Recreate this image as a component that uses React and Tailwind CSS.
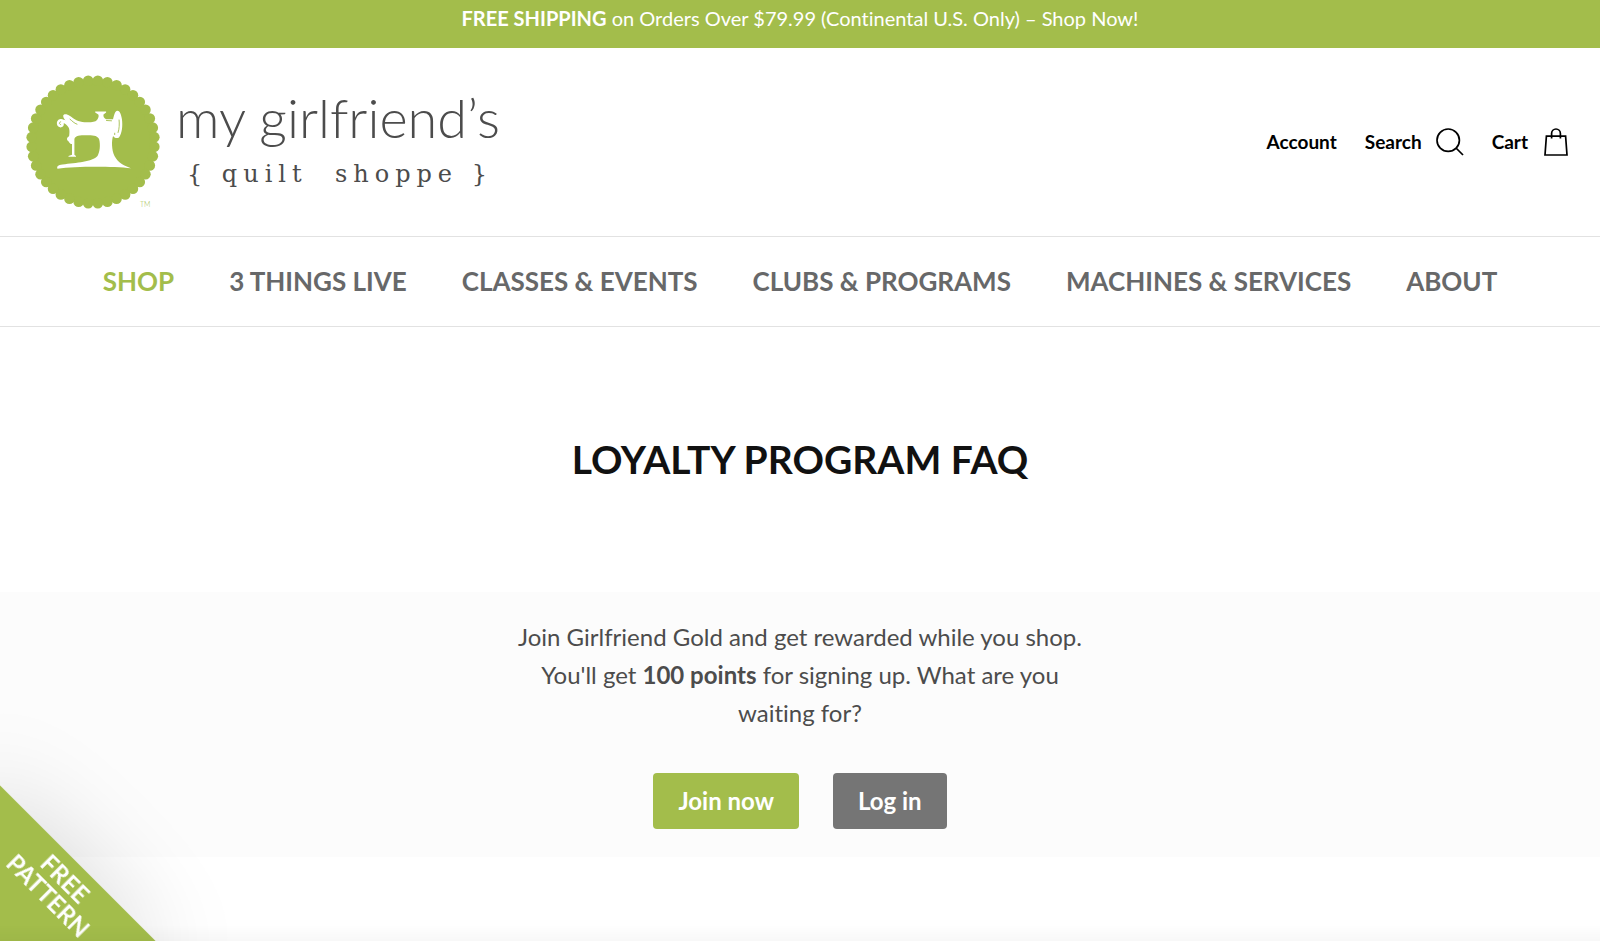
const NAV = [
  "SHOP",
  "3 THINGS LIVE",
  "CLASSES & EVENTS",
  "CLUBS & PROGRAMS",
  "MACHINES & SERVICES",
  "ABOUT",
];

const SCALLOPS = Array.from({ length: 40 }, (_, i) => {
  const a = ((i + 0.5) / 40) * Math.PI * 2;
  return { x: 67 + Math.cos(a) * 61.5, y: 67 + Math.sin(a) * 61.5 };
});

function Badge() {
  return (
    <svg viewBox="0 0 134 134" className="w-[134px] h-[134px] shrink-0 overflow-visible" aria-hidden="true">
      <g fill="#a3bd4b">
        <circle cx="67" cy="67" r="63" />
        {SCALLOPS.map((s, i) => (
          <circle key={i} cx={s.x} cy={s.y} r="5.3" />
        ))}
      </g>
      <g transform="translate(-25.5 -75)">
        {/* machine body, arm and base */}
        <path
          fill="#fff"
          d="M62.7 115.4C63.5 113.6 66.5 113.8 69.5 116C73.5 119 78 122 84 122.2C90 122.4 94.5 122.3 96.5 120C98 118 98.6 116 97.8 114.6L94.7 112.4V111.6H105.6V112.4L103 114.6C102.6 116.5 103.5 118.4 105.5 119.2L112.5 119.3C113.5 116 114 112 116.5 110.8C119 110.4 120.6 114 121.4 119C122.4 126 121.5 133 118.5 137.5C116 139 113.5 137.5 112.6 136C111 140 111 150 114 156C118 163.5 124 165.5 130.5 168.2C112 166.2 76 166 57 168.7C56 166.6 57.5 165 62 164.5C76 162.6 92 162 97 156C99.5 151.5 100 145 98.7 139.5C97.5 136 94 135.2 88 135.2C80 135.2 75 135 73.9 139V154.8L75.5 156V156.8H68V156L71.5 154.8V144C69 144.4 68.6 141 66.8 140.2C66 138.5 66.8 137 68.6 136.2C69.4 132 69 128 67.4 126.5C66 124.5 64.5 123.5 63.2 123.3C64 127 60 128.5 57.8 126.6C55 124 56.6 119 60.5 119.1C62.5 119.2 64 120.4 65 120.4C64 119 62.5 117.5 62.7 115.4Z"
        />
        <path
          fill="none"
          stroke="#a3bd4b"
          strokeWidth="0.9"
          strokeLinecap="round"
          d="M69.5 119.2C71.5 120.8 73.5 123.2 76.5 124.2M118.6 120C119 124 118.8 129 117.6 132.5M106 120.5L111 120.8M114.2 133.2V134.6M60.2 121.8C58.6 121.8 58.2 124.4 60.2 124.6"
        />
      </g>
      <text x="114" y="132" fontSize="7" fill="#a3bd4b" className="font-['Lato',sans-serif] font-light">TM</text>
    </svg>
  );
}

function SearchIcon() {
  return (
    <svg viewBox="0 0 28 28" className="w-7 h-7" fill="none" stroke="currentColor" strokeWidth="1.7" aria-hidden="true">
      <circle cx="12.2" cy="12.2" r="11.2" />
      <path d="M20 20l7 7" />
    </svg>
  );
}

function BagIcon() {
  return (
    <svg viewBox="0 0 24 28" className="w-6 h-7" fill="none" stroke="currentColor" strokeWidth="1.7" aria-hidden="true">
      <path d="M2.4 8.2h19.2L23 27H1z" />
      <path d="M7.6 10.5V5.4a4.4 4.4 0 0 1 8.8 0v5.1" />
    </svg>
  );
}

export default function App() {
  return (
    <div className="min-h-screen bg-white font-['Lato',sans-serif] text-[#4c4c4c] [font-variant-ligatures:none]">
      {/* Announcement bar */}
      <div className="bg-[#a3bd4b] text-white text-center text-xl leading-6 pt-1.5 pb-[18px]">
        <a href="#shop">
          <strong className="font-bold">FREE SHIPPING</strong> on Orders Over $79.99 (Continental U.S. Only) – Shop Now!
        </a>
      </div>

      <header>
        <div className="flex items-center justify-between pl-[26px] pr-8 py-[27px]">
          <a href="#home" className="flex items-center gap-4">
            <Badge />
            <span className="flex flex-col items-center">
              <span className="text-[54px] leading-[64px] font-light">my girlfriend’s</span>
              <span className="pl-1 font-['DejaVu_Serif',serif] text-2xl leading-[48px] tracking-[6px] whitespace-pre">{"{ quilt  shoppe }"}</span>
            </span>
          </a>

          <div className="flex items-center gap-7 text-[19px] font-bold text-black">
            <a href="#account">Account</a>
            <a href="#search" className="flex items-center gap-3.5">
              Search <SearchIcon />
            </a>
            <a href="#cart" className="flex items-center gap-4">
              Cart <BagIcon />
            </a>
          </div>
        </div>

        <nav className="flex justify-center gap-[55px] border-y border-[#e2e2e2] py-[26px] text-[26px] leading-[37px] font-bold text-[#676869]">
          {NAV.map((item, i) => (
            <a key={item} href="#nav" className={i === 0 ? "text-[#a3bd4b]" : ""}>{item}</a>
          ))}
        </nav>
      </header>

      <main>
        <h1 className="pt-[107px] pb-[108px] text-center text-[39px] leading-[50px] font-bold text-[#111]">LOYALTY PROGRAM FAQ</h1>

        <section className="bg-[#fcfcfc] pt-[26px] pb-7 text-center">
          <p className="mx-auto max-w-[580px] text-2xl leading-[38px]">
            Join Girlfriend Gold and get rewarded while you shop. You'll get <strong className="font-bold">100 points</strong> for signing up. What are you waiting for?
          </p>
          <div className="mt-[41px] flex justify-center gap-[34px] text-2xl leading-8 font-bold text-white">
            <button className="rounded bg-[#a3bd4b] px-[25px] py-3">Join now</button>
            <button className="rounded bg-[#757575] px-[25px] py-3">Log in</button>
          </div>
        </section>
      </main>

      {/* Corner ribbon */}
      <button className="fixed -left-[110px] -bottom-[110px] w-[220px] h-[220px] rotate-45 bg-[#a3bd4b] shadow-[0_0_100px_rgba(0,0,0,0.15)] flex flex-col items-center pt-2 pl-1 text-2xl leading-6 font-bold text-white">
        <span>FREE</span>
        <span>PATTERN</span>
      </button>

      {/* Fade along the bottom edge */}
      <div className="fixed inset-x-0 bottom-0 h-4 bg-gradient-to-t from-black/3 to-transparent pointer-events-none" />
    </div>
  );
}
